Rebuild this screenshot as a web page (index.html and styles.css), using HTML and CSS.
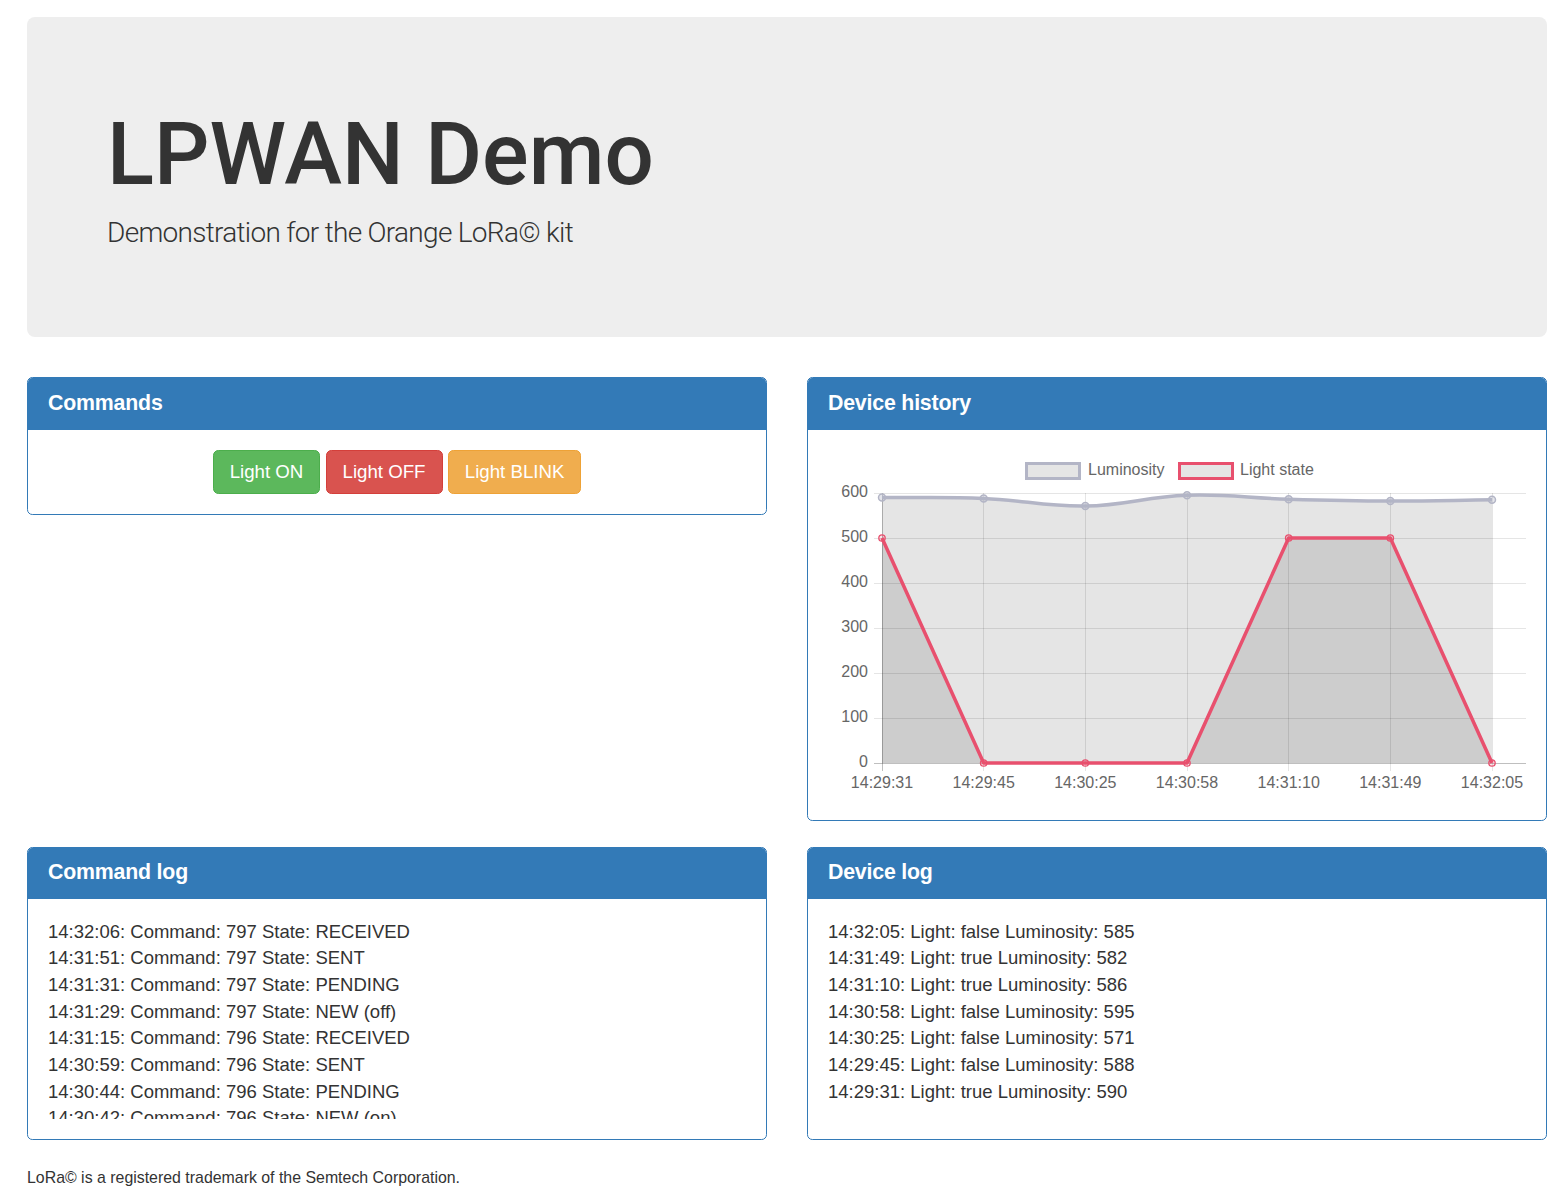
FILE: index.html
```html
<!DOCTYPE html>
<html lang="en">
<head>
<meta charset="utf-8">
<title>LPWAN Demo</title>
<link rel="stylesheet" href="styles.css">
</head>
<body>
<div class="container">
  <div class="jumbotron">
    <h1>LPWAN Demo</h1>
    <p>Demonstration for the Orange LoRa© kit</p>
  </div>

  <div class="panels">
    <div class="panel">
      <div class="panel-heading"><h3 class="panel-title">Commands</h3></div>
      <div class="panel-body buttons">
        <button class="btn btn-success">Light ON</button>
        <button class="btn btn-danger">Light OFF</button>
        <button class="btn btn-warning">Light BLINK</button>
      </div>
    </div>

    <div class="panel">
      <div class="panel-heading"><h3 class="panel-title">Device history</h3></div>
      <div class="panel-body">
        <svg class="chart" width="698" height="350" viewBox="0 0 698 350" xmlns="http://www.w3.org/2000/svg">
          <!-- legend -->
          <rect x="198.5" y="13.5" width="53" height="15" fill="rgba(0,0,0,0.1)" stroke="rgb(179,181,198)" stroke-width="3"/>
          <text x="260" y="21" class="lbl" dominant-baseline="middle">Luminosity</text>
          <rect x="351.5" y="13.5" width="53" height="15" fill="rgba(0,0,0,0.1)" stroke="#e8506e" stroke-width="3"/>
          <text x="412" y="21" class="lbl" dominant-baseline="middle">Light state</text>

          <!-- fills -->
          <path d="M54,47.5 C94.67,47.86 115,46.69 155.67,48.4 C196.33,50.11 216.67,56.68 257.33,56.05 C298,55.42 318.33,46.6 359,45.25 C399.67,43.9 420,48.13 460.67,49.3 C501.33,50.47 521.67,51.01 562.33,51.1 C603,51.19 623.33,50.29 664,49.75 L664,313 L54,313 Z" fill="rgba(0,0,0,0.1)"/>
          <path d="M54,313 L54,88 L155.67,313 L359,313 L460.67,88 L562.33,88 L664,313 Z" fill="rgba(0,0,0,0.1)"/>

          <!-- grid -->
          <g stroke="rgba(0,0,0,0.1)" stroke-width="1">
            <line x1="46" y1="43.5" x2="698" y2="43.5"/>
            <line x1="46" y1="88.5" x2="698" y2="88.5"/>
            <line x1="46" y1="133.5" x2="698" y2="133.5"/>
            <line x1="46" y1="178.5" x2="698" y2="178.5"/>
            <line x1="46" y1="223.5" x2="698" y2="223.5"/>
            <line x1="46" y1="268.5" x2="698" y2="268.5"/>
            <line x1="155.5" y1="43" x2="155.5" y2="321"/>
            <line x1="257.5" y1="43" x2="257.5" y2="321"/>
            <line x1="359.5" y1="43" x2="359.5" y2="321"/>
            <line x1="460.5" y1="43" x2="460.5" y2="321"/>
            <line x1="562.5" y1="43" x2="562.5" y2="321"/>
            <line x1="664.5" y1="43" x2="664.5" y2="321"/>
          </g>
          <g stroke="rgba(0,0,0,0.25)" stroke-width="1">
            <line x1="46" y1="313.5" x2="698" y2="313.5"/>
            <line x1="54.5" y1="43" x2="54.5" y2="321"/>
          </g>

          <!-- y labels -->
          <g class="lbl" text-anchor="end" dominant-baseline="middle">
            <text x="40" y="43">600</text>
            <text x="40" y="88">500</text>
            <text x="40" y="133">400</text>
            <text x="40" y="178">300</text>
            <text x="40" y="223">200</text>
            <text x="40" y="268">100</text>
            <text x="40" y="313">0</text>
          </g>
          <!-- x labels -->
          <g class="lbl" text-anchor="middle" dominant-baseline="middle">
            <text x="54" y="334">14:29:31</text>
            <text x="155.67" y="334">14:29:45</text>
            <text x="257.33" y="334">14:30:25</text>
            <text x="359" y="334">14:30:58</text>
            <text x="460.67" y="334">14:31:10</text>
            <text x="562.33" y="334">14:31:49</text>
            <text x="664" y="334">14:32:05</text>
          </g>

          <!-- lines -->
          <path d="M54,47.5 C94.67,47.86 115,46.69 155.67,48.4 C196.33,50.11 216.67,56.68 257.33,56.05 C298,55.42 318.33,46.6 359,45.25 C399.67,43.9 420,48.13 460.67,49.3 C501.33,50.47 521.67,51.01 562.33,51.1 C603,51.19 623.33,50.29 664,49.75" fill="none" stroke="rgb(179,181,198)" stroke-width="3.5"/>
          <g fill="rgba(179,181,198,0.35)" stroke="rgb(179,181,198)" stroke-width="1.5">
            <circle cx="54" cy="47.5" r="3.5"/>
            <circle cx="155.67" cy="48.4" r="3.5"/>
            <circle cx="257.33" cy="56.05" r="3.5"/>
            <circle cx="359" cy="45.25" r="3.5"/>
            <circle cx="460.67" cy="49.3" r="3.5"/>
            <circle cx="562.33" cy="51.1" r="3.5"/>
            <circle cx="664" cy="49.75" r="3.5"/>
          </g>
          <polyline points="54,88 155.67,313 257.33,313 359,313 460.67,88 562.33,88 664,313" fill="none" stroke="#e8506e" stroke-width="3.5" stroke-linejoin="round"/>
          <g fill="rgba(232,80,110,0.15)" stroke="#e8506e" stroke-width="1.3">
            <circle cx="54" cy="88" r="3.2"/>
            <circle cx="155.67" cy="313" r="3.2"/>
            <circle cx="257.33" cy="313" r="3.2"/>
            <circle cx="359" cy="313" r="3.2"/>
            <circle cx="460.67" cy="88" r="3.2"/>
            <circle cx="562.33" cy="88" r="3.2"/>
            <circle cx="664" cy="313" r="3.2"/>
          </g>
        </svg>
      </div>
    </div>

    <div class="panel">
      <div class="panel-heading"><h3 class="panel-title">Command log</h3></div>
      <div class="panel-body">
        <div class="log">
          <div>14:32:06: Command: 797 State: RECEIVED</div>
          <div>14:31:51: Command: 797 State: SENT</div>
          <div>14:31:31: Command: 797 State: PENDING</div>
          <div>14:31:29: Command: 797 State: NEW (off)</div>
          <div>14:31:15: Command: 796 State: RECEIVED</div>
          <div>14:30:59: Command: 796 State: SENT</div>
          <div>14:30:44: Command: 796 State: PENDING</div>
          <div>14:30:42: Command: 796 State: NEW (on)</div>
        </div>
      </div>
    </div>

    <div class="panel">
      <div class="panel-heading"><h3 class="panel-title">Device log</h3></div>
      <div class="panel-body">
        <div class="log">
          <div>14:32:05: Light: false Luminosity: 585</div>
          <div>14:31:49: Light: true Luminosity: 582</div>
          <div>14:31:10: Light: true Luminosity: 586</div>
          <div>14:30:58: Light: false Luminosity: 595</div>
          <div>14:30:25: Light: false Luminosity: 571</div>
          <div>14:29:45: Light: false Luminosity: 588</div>
          <div>14:29:31: Light: true Luminosity: 590</div>
        </div>
      </div>
    </div>
  </div>

  <footer class="footer"><small>LoRa© is a registered trademark of the Semtech Corporation.</small></footer>
</div>
</body>
</html>
```

FILE: styles.css
```css
* { box-sizing: border-box; }

html, body {
  margin: 0;
  padding: 0;
  background: #fff;
}

body {
  font-family: "Liberation Sans", Arial, Helvetica, sans-serif;
  font-size: 18.5px;
  line-height: 26.67px;
  color: #333;
}

.container {
  padding: 17px 21px 0 27px;
}

.jumbotron {
  background: #eee;
  border-radius: 8px;
  padding: 64px 80px;
  margin-bottom: 40px;
}

.jumbotron h1 {
  font-family: Roboto, "Liberation Sans", sans-serif;
  font-size: 87px;
  line-height: 92.4px;
  font-weight: 500;
  margin: 26.67px 0 13.33px;
  color: #333;
}

.jumbotron p {
  font-family: Roboto, "Liberation Sans", sans-serif;
  font-weight: 300;
  font-size: 28px;
  line-height: 40px;
  letter-spacing: -0.7px;
  margin: 0 0 20px;
}

.panels {
  display: grid;
  grid-template-columns: 1fr 1fr;
  column-gap: 40px;
  row-gap: 26px;
  align-items: start;
}

.panel {
  border: 1px solid #337ab7;
  border-radius: 5.33px;
  background: #fff;
  overflow: hidden;
}

.panel-heading {
  background: #337ab7;
  color: #fff;
  padding: 13.33px 20px;
  border-bottom: 1px solid #337ab7;
}

.panel-title {
  margin: 0;
  font-size: 21.33px;
  line-height: 23.5px;
  font-weight: bold;
  letter-spacing: -0.2px;
}

.panel-body {
  padding: 20px;
}

.buttons {
  display: flex;
  justify-content: center;
  gap: 5.3px;
}

.btn {
  font-family: "Liberation Sans", Arial, sans-serif;
  font-size: 18.67px;
  line-height: 26.67px;
  padding: 8px 16px;
  border: 1px solid transparent;
  border-radius: 5.33px;
  color: #fff;
  cursor: pointer;
}

.btn-success { background: #5cb85c; border-color: #4cae4c; }
.btn-danger  { background: #d9534f; border-color: #d43f3a; }
.btn-warning { background: #f0ad4e; border-color: #eea236; }

.chart {
  display: block;
}

.chart .lbl, .chart text {
  font-family: "Liberation Sans", Arial, sans-serif;
  font-size: 16px;
  fill: #666;
}

.log {
  height: 200px;
  overflow: hidden;
}

.footer {
  margin-top: 24px;
  line-height: 26.67px;
}

.footer small {
  font-size: 15.9px;
}
```
